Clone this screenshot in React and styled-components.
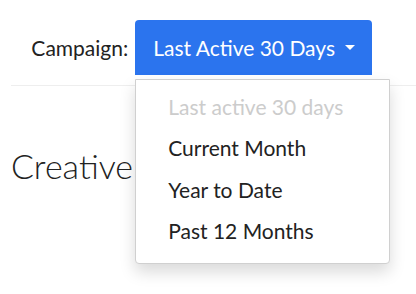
import React from "react";
import styled, { createGlobalStyle } from "styled-components";

const GlobalStyle = createGlobalStyle`
    body {
        margin: 0;
        background: #fff;
        font-family: Lato, "Open Sans", sans-serif;
        color: #222;
    }
`;

const Page = styled.div`
    width: 416px;
    height: 294px;
    overflow: hidden;
    padding-left: 11px;
    box-sizing: border-box;
`;

const Header = styled.div`
    display: flex;
    align-items: center;
    justify-content: flex-end;
    gap: 7px;
    padding: 20px 44px 10px 0;
    border-bottom: 1px solid #eeeeee;
`;

const Label = styled.span`
    font-size: 21px;
    color: #222;
`;

const Picker = styled.div`
    position: relative;
`;

const Toggle = styled.button`
    display: flex;
    align-items: center;
    gap: 10px;
    height: 55px;
    padding: 0 17px 0 18px;
    border: none;
    border-radius: 4px 4px 0 0;
    background: #2b74ee;
    color: #fff;
    font-family: inherit;
    font-size: 21px;
    cursor: pointer;
`;

const Caret = styled.span`
    width: 0;
    height: 0;
    border-left: 5px solid transparent;
    border-right: 5px solid transparent;
    border-top: 5px solid #fff;
`;

const Menu = styled.ul`
    position: absolute;
    top: calc(100% + 4px);
    left: 0;
    width: 255px;
    box-sizing: border-box;
    margin: 0;
    padding: 7px 0 10px;
    list-style: none;
    background: #fff;
    border: 1px solid #d0d0d0;
    border-radius: 0 0 4px 4px;
    box-shadow: 0 8px 16px rgba(0, 0, 0, 0.15);
    z-index: 2;
`;

const Item = styled.li`
    height: 41.5px;
    display: flex;
    align-items: center;
    padding-left: 32px;
    font-size: 21px;
    line-height: 1;
    padding-bottom: 3px;
    box-sizing: border-box;
    color: ${(p) => (p.disabled ? "#cccccc" : "#222")};
`;

const Title = styled.h1`
    margin: 60px 0 0;
    font-size: 34px;
    line-height: 40px;
    font-weight: 300;
    color: #222;
`;

const options = ["Current Month", "Year to Date", "Past 12 Months"];

const App = () => {
    return (
        <Page>
            <GlobalStyle />
            <Header>
                <Label>Campaign:</Label>
                <Picker>
                    <Toggle>
                        Last Active 30 Days
                        <Caret />
                    </Toggle>
                    <Menu>
                        <Item disabled>Last active 30 days</Item>
                        {options.map((o) => (
                            <Item key={o}>{o}</Item>
                        ))}
                    </Menu>
                </Picker>
            </Header>
            <Title>Creative</Title>
        </Page>
    );
};

export default App;
